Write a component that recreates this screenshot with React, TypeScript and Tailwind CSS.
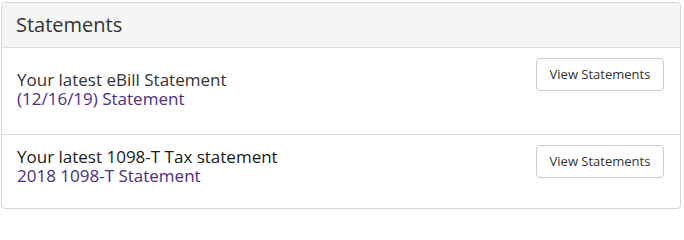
import React from 'react'

type Row = {
  title: string
  link: string
  titleClass: string
  boxClass: string
  textPad: string
}

const rows: Row[] = [
  {
    title: 'Your latest eBill Statement',
    link: '(12/16/19) Statement',
    titleClass: 'text-[#333333]',
    boxClass: 'h-[87px] border-b border-[#dddddd]',
    textPad: 'pt-[22px]',
  },
  {
    title: 'Your latest 1098-T Tax statement',
    link: '2018 1098-T Statement',
    titleClass: 'text-[#1a1a1a]',
    boxClass: 'h-[73px]',
    textPad: 'pt-[12px]',
  },
]

export default function App() {
  return (
    <div className="pl-px pt-[2px] bg-white" style={{ fontFamily: '"Open Sans", "Noto Sans", sans-serif' }}>
      <div className="w-[680px] border border-[#d6d6d6] rounded-[4px] overflow-hidden bg-white">
        <div className="h-[45px] bg-[#f5f5f5] border-b border-[#dddddd] px-[14px] flex items-center">
          <h2 className="text-[20px] leading-none text-[#333333]">Statements</h2>
        </div>
        {rows.map((row) => (
          <div key={row.title} className={`flex justify-between pl-[15px] pr-[16px] ${row.boxClass}`}>
            <div className={row.textPad}>
              <p className={`text-[17px] leading-[19px] ${row.titleClass}`}>{row.title}</p>
              <a href="#" className="block text-[17px] leading-[19px] text-[#4b2e83]">
                {row.link}
              </a>
            </div>
            <div className="pt-[10px]">
              <button className="h-[33px] w-[128px] rounded-[4px] border border-[#cccccc] bg-white text-[13px] text-[#333333]">
                View Statements
              </button>
            </div>
          </div>
        ))}
      </div>
    </div>
  )
}
